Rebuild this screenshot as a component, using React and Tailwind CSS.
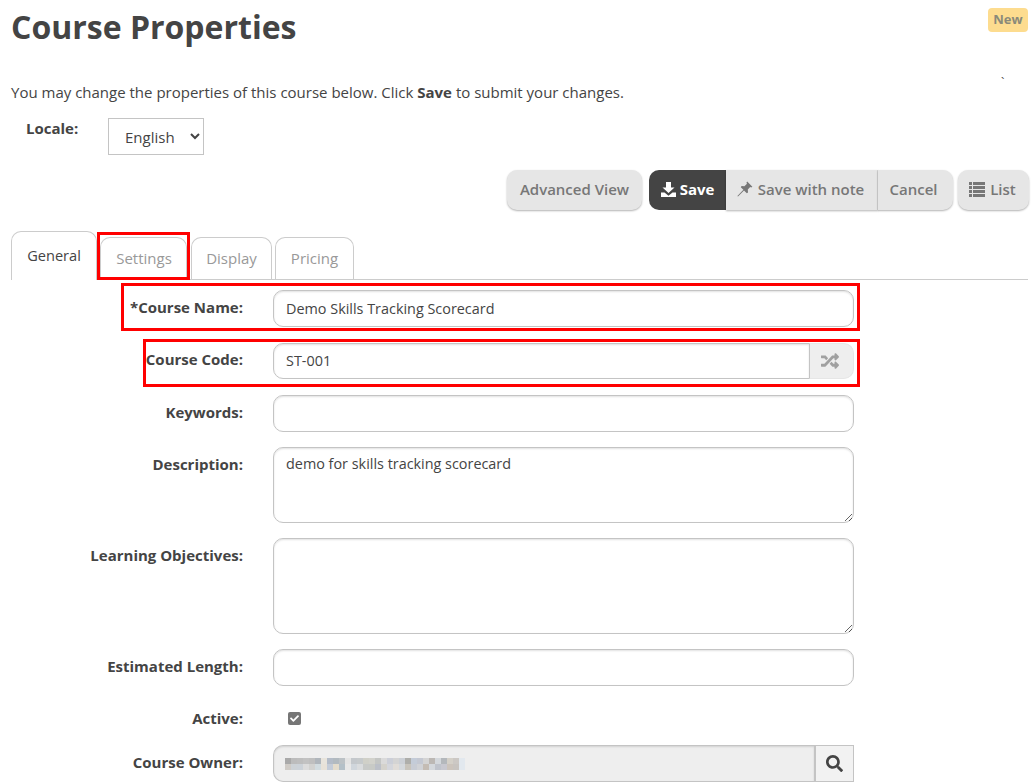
import React from "react";
import { FaRandom, FaSearch, FaCheck } from "react-icons/fa";

const tabCls = "h-[42px] border border-b-0 border-[#ccc] rounded-t-[10px] flex items-center justify-center text-[#999] text-[15px]";
const inputCls = "w-full border border-[#c4c4c4] rounded-[10px] px-3 text-[14.4px] text-[#444] shadow-[inset_0_1px_2px_rgba(0,0,0,0.12)] bg-white outline-none";
const btn = "h-[40px] pb-[2px] flex items-center justify-center gap-[5px] bg-[#e6e6e6] text-[#777] font-semibold text-[15px] shadow-[0_1px_2px_rgba(0,0,0,0.3)]";

function Row({ label, top, children, labelTop = 0 }) {
  return (
    <div className="flex" style={{ marginTop: top }}>
      <label className="w-[232px] shrink-0 text-right font-bold text-[15px] text-[#444] leading-[20px]" style={{ paddingTop: labelTop }}>{label}</label>
      <div className="ml-[30px] w-[581px] shrink-0">{children}</div>
    </div>
  );
}

const mosaicTop = ["#a9a9a9","#bcbcbc","#bebebe","#c2c2c2","#bfbfbf","#b0b6bc","#e8e4dc","#b4bcc8","#b2bac0","#bcc2c6","#e4e4e4","#c4c8cc","#c6cacc","#d0d0c8","#d2d2cc","#c4c6c4","#dadada","#cccfd8","#d4d4d4","#ccd0d6","#aeaeaa","#c4ccd8","#c4c8d2","#d4d4d4","#bcb8b4","#d4d8dc","#b4b8bc","#d4d0c8","#ccc8c4","#e2e8ee"];
const mosaicBottom = ["#cfcbc6","#cdd2d6","#ccd2d8","#dcdcdc","#d2d2d0","#d2dce0","#e8e2d8","#c4ccd8","#e4dccc","#b4c0c8","#e8e8e8","#d0d6dc","#dadcde","#c8cac8","#c8cac6","#bcc0c8","#d4d2cc","#d4d6dc","#e0dcd8","#d4d8dc","#c8c4bc","#c8ccd4","#d0d2d6","#c4bcb4","#d4d8dc","#c0c4cc","#c8c8d0","#ccc4bc","#c8c4c0","#e2e8ee"];

export default function App() {
  return (
    <div className="relative w-[1035px] h-[782px] overflow-hidden bg-white px-[11px] font-['Open_Sans',sans-serif] text-[#444]">
      <div className="absolute left-[988px] top-[8px] w-[40px] h-[24px] rounded-[4px] bg-[#fddc8f] text-[#8a8a7a] font-bold text-[13px] flex items-center justify-center">New</div>
      <div className="absolute left-[1001px] top-[74px] text-[12px] text-[#444]">`</div>

      <h1 className="m-0 pt-[6px] text-[32px] leading-[41px] font-bold text-[#444]">Course Properties</h1>
      <p className="mt-[35px] text-[15px] leading-[20px]">You may change the properties of this course below. Click <b>Save</b> to submit your changes.</p>

      <div className="flex mt-[16px] h-[37px]">
        <span className="ml-[15px] w-[82px] font-bold text-[15px] leading-[20px]">Locale:</span>
        <select className="w-[96px] h-[37px] border border-[#c4c4c4] bg-white pl-[12px] text-[15px] text-[#444]" defaultValue="English">
          <option>English</option>
        </select>
      </div>

      <div className="flex justify-end mt-[15px] w-[1018px]">
        <button className={btn + " w-[135px] rounded-[10px]"}>Advanced View</button>
        <div className="flex ml-[7px] mr-[5px]">
          <button className="h-[40px] pb-[2px] w-[77px] rounded-l-[10px] bg-[#444] text-white font-bold text-[15px] flex items-center justify-center gap-[4px]">
            <svg width="15" height="15" viewBox="0 0 15 15" fill="currentColor" className="block">
              <path d="M5 0h5v5.5h3.5L7.5 11 1.5 5.5H5z" />
              <path d="M0 10.5h3.5l4 3.2 4-3.2H15V15H0z" />
            </svg>
            Save
          </button>
          <button className={btn + " w-[152px] pr-[2px] border-r border-[#d4d4d4]"}>
            <svg width="16" height="16" viewBox="0 0 16 16" fill="currentColor" className="block">
              <path d="M10.2 0.6 15.4 5.8 14.2 6.6 13.2 6 10.8 8.6 11 11.4 9.8 12.2 7 9.4 1 15.4 0.4 15 6.4 8.8 3.8 6.2 4.6 5 7.4 5.2 10 2.8 9.4 1.8z" />
            </svg>
            Save with note
          </button>
          <button className={btn + " w-[75px] pr-[4px] rounded-r-[10px]"}>Cancel</button>
        </div>
        <button className={btn + " w-[71px] rounded-[10px] pr-[2px]"}>
          <svg width="16" height="15" viewBox="0 0 16 15" fill="currentColor" className="block">
            <rect x="0" y="0" width="3" height="3" /><rect x="4" y="0" width="12" height="3" />
            <rect x="0" y="4" width="3" height="3" /><rect x="4" y="4" width="12" height="3" />
            <rect x="0" y="8" width="3" height="3" /><rect x="4" y="8" width="12" height="3" />
            <rect x="0" y="12" width="3" height="3" /><rect x="4" y="12" width="12" height="3" />
          </svg>
          List
        </button>
      </div>

      <div className="relative flex items-end gap-[3px] mt-[21px] w-[1017px] h-[49px] border-b border-[#ccc]">
        <div className="h-[49px] w-[86px] border border-b-0 border-[#ccc] rounded-t-[10px] bg-white flex items-center justify-center text-[14.6px] text-[#444] mb-[-1px] pb-[1px]">General</div>
        <div className={tabCls + " w-[87px] pl-[1px]"}>Settings</div>
        <div className={tabCls + " w-[81px] ml-[1px]"}>Display</div>
        <div className={tabCls + " w-[79px]"}>Pricing</div>
      </div>

      <Row label="*Course Name:" top={10} labelTop={7}><input readOnly value="Demo Skills Tracking Scorecard" className={inputCls + " h-[37px]"} /></Row>
      <Row label="Course Code:" top={16} labelTop={6}>
        <div className="flex h-[36px]">
          <input readOnly value="ST-001" className={inputCls + " flex-1 min-w-0 rounded-r-none"} />
          <div className="w-[44px] bg-[#eee] border border-l-0 border-[#e6e6e6] rounded-r-[10px] flex items-center justify-center text-[#a0a0a0] pr-[3px]"><FaRandom className="text-[18px]" /></div>
        </div>
      </Row>
      <Row label="Keywords:" top={16} labelTop={7}><input readOnly className={inputCls + " h-[37px]"} /></Row>
      <Row label="Description:" top={15} labelTop={7}>
        <textarea readOnly value="demo for skills tracking scorecard" className={inputCls + " block h-[76px] py-[6px] leading-[20px]"} />
      </Row>
      <Row label="Learning Objectives:" top={15} labelTop={7}>
        <textarea readOnly className={inputCls + " block h-[96px]"} />
      </Row>
      <Row label="Estimated Length:" top={15} labelTop={7}><input readOnly className={inputCls + " h-[37px]"} /></Row>
      <Row label="Active:" top={22} labelTop={0}>
        <div className="h-[20px] flex items-center pl-[15px]">
          <span className="w-[13px] h-[13px] rounded-[2px] bg-[#767676] flex items-center justify-center text-white"><FaCheck className="text-[9px]" /></span>
        </div>
      </Row>
      <Row label="Course Owner:" top={17} labelTop={7}>
        <div className="flex h-[37px]">
          <div className="flex-1 bg-[#eee] border border-[#c4c4c4] border-r-[2px] rounded-l-[10px] flex items-center pl-[11px] shadow-[inset_0_1px_2px_rgba(0,0,0,0.12)]">
            <svg width="180" height="12" className="block">
              {mosaicTop.map((c, i) => (
                <g key={i}>
                  <rect x={i * 6} y="0" width="6" height="6" fill={c} />
                  <rect x={i * 6} y="6" width="6" height="6" fill={mosaicBottom[i]} />
                </g>
              ))}
            </svg>
          </div>
          <div className="w-[38px] bg-[#f2f2f2] border border-l-0 border-[#c4c4c4] flex items-center justify-center text-[#444]"><FaSearch className="text-[17px]" /></div>
        </div>
      </Row>

      <div className="absolute left-[97px] top-[232px] w-[93px] h-[48px] border-[3px] border-[#f00]"></div>
      <div className="absolute left-[121px] top-[283px] w-[739px] h-[48px] border-[3px] border-[#f00]"></div>
      <div className="absolute left-[143px] top-[339px] w-[717px] h-[48px] border-[3px] border-[#f00]"></div>
    </div>
  );
}
